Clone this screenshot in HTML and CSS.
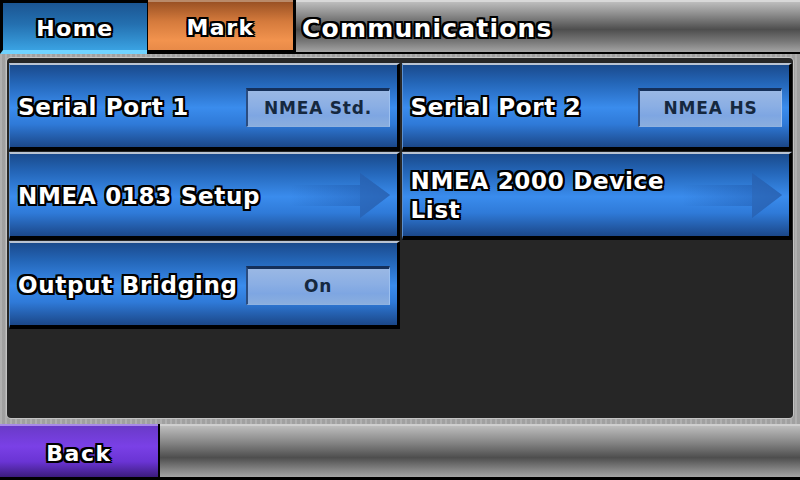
FILE: index.html
```html
<!DOCTYPE html>
<html lang="en">
<head>
    <meta charset="UTF-8">
    <title>Communications</title>
    <link rel="stylesheet" href="styles.css">
</head>
<body>

    <div class="screen">
        <!-- Top bar -->
        <header class="topbar">
            <div class="tab tab-home">Home</div>
            <div class="tab tab-mark">Mark</div>
            <div class="title">Communications</div>
        </header>

        <!-- Settings list -->
        <div class="frame">
            <div class="panel">
                <div class="item">
                    <span class="label">Serial Port 1</span>
                    <span class="value">NMEA Std.</span>
                </div>
                <div class="item">
                    <span class="label">Serial Port 2</span>
                    <span class="value">NMEA HS</span>
                </div>
                <div class="item">
                    <span class="label label-wrap">NMEA 0183 Setup</span>
                    <svg class="arrow" viewBox="0 0 100 46" width="100" height="46">
                        <defs>
                            <linearGradient id="shaft1" x1="0" x2="1" y1="0" y2="0">
                                <stop offset="0" stop-color="#1a4c9a" stop-opacity="0"/>
                                <stop offset="1" stop-color="#1a4c9a" stop-opacity="0.5"/>
                            </linearGradient>
                        </defs>
                        <path d="M0 12 H70 V0 L100 22 L70 45 V33 H0 Z" fill="url(#shaft1)"/>
                        <path d="M70 0 L100 22 L70 45 Z" fill="#2c64b2" opacity="0.55"/>
                    </svg>
                </div>
                <div class="item">
                    <span class="label label-wrap">NMEA 2000 Device List</span>
                    <svg class="arrow" viewBox="0 0 100 46" width="100" height="46">
                        <defs>
                            <linearGradient id="shaft2" x1="0" x2="1" y1="0" y2="0">
                                <stop offset="0" stop-color="#1a4c9a" stop-opacity="0"/>
                                <stop offset="1" stop-color="#1a4c9a" stop-opacity="0.5"/>
                            </linearGradient>
                        </defs>
                        <path d="M0 12 H70 V0 L100 22 L70 45 V33 H0 Z" fill="url(#shaft2)"/>
                        <path d="M70 0 L100 22 L70 45 Z" fill="#2c64b2" opacity="0.55"/>
                    </svg>
                </div>
                <div class="item">
                    <span class="label">Output Bridging</span>
                    <span class="value">On</span>
                </div>
            </div>
        </div>

        <!-- Bottom bar -->
        <footer class="bottombar">
            <div class="tab tab-back">Back</div>
            <div class="filler"></div>
        </footer>
    </div>

</body>
</html>
```

FILE: styles.css
```css
body {
    margin: 0;
    background: #000;
    font-family: "DejaVu Sans", Verdana, sans-serif;
    font-weight: bold;
}

.screen {
    width: 800px;
    height: 480px;
    display: flex;
    flex-direction: column;
    background: #a9a9a9;
    overflow: hidden;
}

/* outlined white text used everywhere */
.tab, .title, .label {
    color: #fff;
    text-shadow:
        -2px -2px 0 #000, 0 -2px 0 #000, 2px -2px 0 #000,
        -2px 0 0 #000, 2px 0 0 #000,
        -2px 2px 0 #000, 0 2px 0 #000, 2px 2px 0 #000;
}

.topbar {
    height: 54px;
    display: flex;
    background: #000;
    flex-shrink: 0;
}

.tab {
    display: flex;
    align-items: center;
    justify-content: center;
    padding-top: 3px;
    font-size: 22px;
    letter-spacing: 1.5px;
    box-sizing: border-box;
}

.tab-home {
    width: 147px;
    border-top: 3px solid #000;
    border-left: 3px solid #000;
    border-bottom: 4px solid #6fd2ff;
    background: linear-gradient(#1b5592 0%, #2470b0 45%, #3aa2e2 100%);
}

.tab-mark {
    width: 145px;
    margin-left: 1px;
    border-top: 2px solid #b98a6a;
    border-bottom: 4px solid #000;
    background: linear-gradient(#9a5124 0%, #d47a3c 40%, #f2934e 80%, #e88a48 100%);
}

.title {
    flex: 1;
    margin-left: 3px;
    display: flex;
    align-items: center;
    padding: 3px 0 0 6px;
    font-size: 25px;
    letter-spacing: 1.2px;
    border-top: 2px solid #d8d8d8;
    border-bottom: 2px solid #000;
    background: linear-gradient(#bdbdbd 0%, #8c8c8c 25%, #4e4e4e 55%, #7a7a7a 80%, #a4a4a4 100%);
}

.frame {
    flex: 1;
    padding: 4px 7px 6px 7px;
    background:
        repeating-linear-gradient(90deg, rgba(255,255,255,0.08) 0 2px, rgba(0,0,0,0.05) 2px 5px),
        #a9a9a9;
}

.panel {
    height: 100%;
    box-sizing: border-box;
    background: #262626;
    border-radius: 4px;
    padding: 5px 1px 0 2px;
    display: grid;
    grid-template-columns: 1fr 1fr;
    grid-template-rows: 88px 88px 88px;
    gap: 1px 2px;
    box-shadow: 0 0 0 1px #c4c4c4;
}

.item {
    display: flex;
    align-items: center;
    padding: 2px 7px 0 8px;
    border-top: 2px solid #b9c3d2;
    border-left: 1px solid #5a8fd0;
    border-right: 3px solid #000;
    border-bottom: 4px solid #000;
    background: linear-gradient(#1a4a8c 0%, #2466b8 22%, #3a8ced 52%, #2f7ad8 72%, #1b4788 100%);
}

.label {
    font-size: 23px;
    letter-spacing: 0.7px;
    line-height: 29px;
}

.label-wrap {
    max-width: 290px;
}

.value {
    margin-left: auto;
    width: 144px;
    height: 39px;
    box-sizing: border-box;
    display: flex;
    align-items: center;
    justify-content: center;
    font-size: 17px;
    letter-spacing: 0.8px;
    color: #15283f;
    border-top: 3px solid #15305a;
    border-left: 2px solid #2a4c80;
    border-right: 1px solid #9cc0f0;
    border-bottom: 1px solid #8fb2e0;
    background: linear-gradient(#9ab8e4 0%, #8aaee4 45%, #7ea6e2 70%, #8aaede 100%);
}

.arrow {
    margin-left: auto;
    flex-shrink: 0;
}

.bottombar {
    height: 56px;
    display: flex;
    flex-shrink: 0;
    background: #000;
}

.tab-back {
    width: 158px;
    border-top: 2px solid #a98ae8;
    border-bottom: 3px solid #000;
    background: linear-gradient(#6a3ac8 0%, #7a40e6 40%, #6a34d4 70%, #3c1c7c 100%);
}

.filler {
    flex: 1;
    margin-left: 2px;
    border-top: 2px solid #cfcfcf;
    border-bottom: 3px solid #000;
    background: linear-gradient(#bdbdbd 0%, #8a8a8a 30%, #4e4e4e 62%, #8a8a8a 88%, #a4a4a4 100%);
}
```
